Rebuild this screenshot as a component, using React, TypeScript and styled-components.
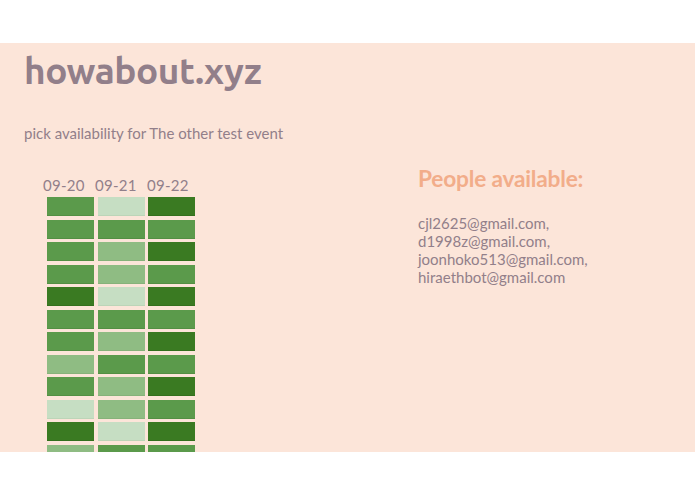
import React from "react";
import styled, { createGlobalStyle } from "styled-components";

const Global = createGlobalStyle`
  html, body { margin: 0; padding: 0; background: #ffffff; }
  body { font-family: Lato, "Open Sans", sans-serif; }
`;

const Page = styled.div`
  margin-top: 43px;
  height: 409px;
  background: #fce5d9;
  overflow: hidden;
  padding: 0 24px;
  box-sizing: border-box;
`;

const Title = styled.h1`
  margin: 0;
  padding-top: 6px;
  font-family: Ubuntu, "Open Sans", sans-serif;
  font-weight: 600;
  font-size: 37px;
  line-height: 44px;
  letter-spacing: -0.5px;
  color: #927f8a;
`;

const Subtitle = styled.p`
  margin: 31px 0 0;
  font-size: 15px;
  line-height: 18px;
  color: #927f8a;
`;

const Body = styled.div`
  display: flex;
  margin-top: 24px;
`;

const Schedule = styled.div`
  margin-left: 19px;
  width: 375px;
  flex-shrink: 0;
`;

const DateRow = styled.div`
  display: flex;
  gap: 12px;
  margin-top: 10px;
`;

const DateLabel = styled.span`
  width: 40px;
  white-space: nowrap;
  font-size: 15px;
  line-height: 18px;
  color: #927f8a;
  letter-spacing: 0.3px;
`;

const Grid = styled.div`
  display: grid;
  grid-template-columns: repeat(3, 47px);
  grid-auto-rows: 19px;
  column-gap: 3.5px;
  row-gap: 3.5px;
  margin: 3px 0 0 4px;
`;

const shades: Record<string, string> = {
  D: "#3a7a22",
  M: "#5b9a4b",
  L: "#8fbc83",
  V: "#c6dec3",
};

const borders: Record<string, string> = {
  D: "#33701d",
  M: "#528f43",
  L: "#86b27a",
  V: "#bcd5b8",
};

const Cell = styled.div<{ $level: string }>`
  background: ${(p) => shades[p.$level]};
  border-bottom: 1px solid ${(p) => borders[p.$level]};
  box-sizing: border-box;
`;

const Panel = styled.div`
  display: flex;
  flex-direction: column;
`;

const PanelTitle = styled.h2`
  margin: 0;
  font-size: 22.7px;
  line-height: 26px;
  font-weight: 700;
  color: #f2ad8a;
  letter-spacing: -0.2px;
`;

const EmailList = styled.div`
  margin-top: 22px;
  font-size: 15px;
  line-height: 18px;
  color: #927f8a;
`;

const rows = [
  "MVD",
  "MMM",
  "MLD",
  "MLM",
  "DVD",
  "MMM",
  "MLD",
  "LMM",
  "MLD",
  "VLM",
  "DVD",
  "LMM",
  "MLD",
];

const emails = [
  "cjl2625@gmail.com,",
  "d1998z@gmail.com,",
  "joonhoko513@gmail.com,",
  "hiraethbot@gmail.com",
];

export default function App() {
  return (
    <>
      <Global />
      <Page>
        <Title>howabout.xyz</Title>
        <Subtitle>pick availability for The other test event</Subtitle>
        <Body>
          <Schedule>
            <DateRow>
              <DateLabel>09-20</DateLabel>
              <DateLabel>09-21</DateLabel>
              <DateLabel>09-22</DateLabel>
            </DateRow>
            <Grid>
              {rows.flatMap((r, i) =>
                r.split("").map((c, j) => <Cell key={`${i}-${j}`} $level={c} />)
              )}
            </Grid>
          </Schedule>
          <Panel>
            <PanelTitle>People available:</PanelTitle>
            <EmailList>
              {emails.map((e) => (
                <div key={e}>{e}</div>
              ))}
            </EmailList>
          </Panel>
        </Body>
      </Page>
    </>
  );
}
